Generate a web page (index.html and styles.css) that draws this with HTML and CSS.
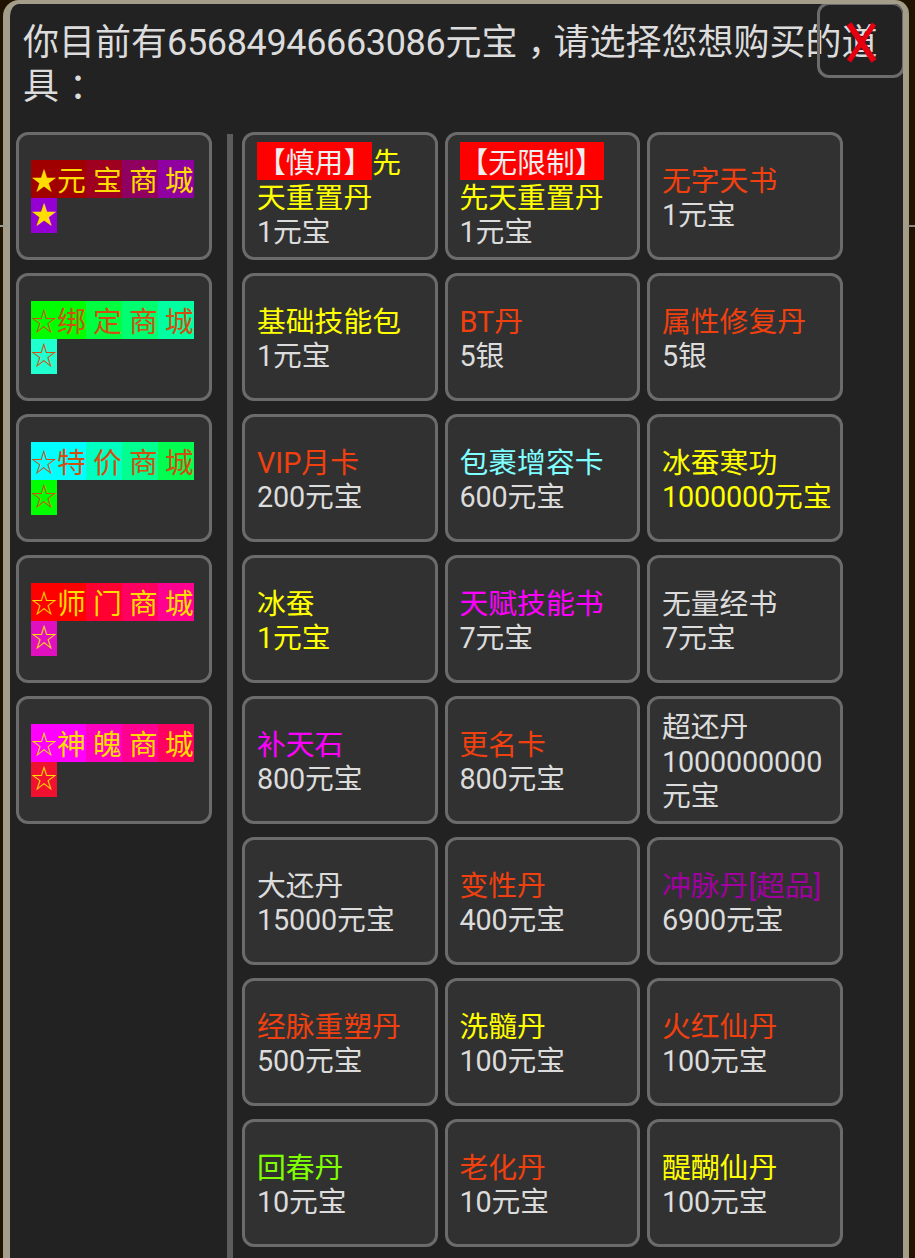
FILE: index.html
```html
<!DOCTYPE html>
<html lang="zh-CN">
  <head>
    <meta charset="UTF-8" />
    <title>元宝商城</title>
    <link rel="stylesheet" href="styles.css">
  </head>
  <body>
    <div class="dialog">
      <p class="dialog-title">你目前有<span class="num">65684946663086</span>元宝<span class="punct">，</span>请选择您想购买的道具<span class="punct">：</span></p>

      <button class="close-btn" type="button" aria-label="关闭">
        <svg width="88" height="76" viewBox="0 0 88 76">
          <path d="M32 22 L57 59" stroke="#e6000f" stroke-width="6" fill="none" />
          <path d="M57 22 L32 59" stroke="#e6000f" stroke-width="5" fill="none" />
        </svg>
      </button>

      <div class="shop-body">
        <!-- 左侧商城列表 -->
        <div class="shop-list">
          <div class="card shop-card shop-gold">
            <div class="shop-label">
              <span class="star" style="background:#a00000">★</span><span style="background:#a00000">元</span><span style="background:#a00020"> 宝</span><span style="background:#900060"> 商</span><span style="background:#9000a0"> 城</span><span class="star wrap" style="background:#9400d3">★</span>
            </div>
          </div>
          <div class="card shop-card shop-orange">
            <div class="shop-label">
              <span class="star" style="background:#00ff00">☆</span><span style="background:#00ff00">绑</span><span style="background:#00ff40"> 定</span><span style="background:#00ff70"> 商</span><span style="background:#00ffa0"> 城</span><span class="star wrap" style="background:#20ffd0">☆</span>
            </div>
          </div>
          <div class="card shop-card shop-orange">
            <div class="shop-label">
              <span class="star" style="background:#00ffff">☆</span><span style="background:#00ffff">特</span><span style="background:#00ffc0"> 价</span><span style="background:#00ff90"> 商</span><span style="background:#00ff50"> 城</span><span class="star wrap" style="background:#00ff00">☆</span>
            </div>
          </div>
          <div class="card shop-card shop-gold">
            <div class="shop-label">
              <span class="star" style="background:#ff0000">☆</span><span style="background:#ff0000">师</span><span style="background:#ff0030"> 门</span><span style="background:#ff0060"> 商</span><span style="background:#ff0090"> 城</span><span class="star wrap" style="background:#e010c0">☆</span>
            </div>
          </div>
          <div class="card shop-card shop-gold">
            <div class="shop-label">
              <span class="star" style="background:#ff00ff">☆</span><span style="background:#ff00ff">神</span><span style="background:#ff00c0"> 魄</span><span style="background:#ff0090"> 商</span><span style="background:#ff0060"> 城</span><span class="star wrap" style="background:#f01030">☆</span>
            </div>
          </div>
        </div>

        <div class="divider"></div>

        <!-- 道具列表 -->
        <div class="item-grid">
          <div class="card item-card"><div><span class="tag">【慎用】</span><span class="yellow">先天重置丹</span><br><span class="num">1</span>元宝</div></div>
          <div class="card item-card"><div><span class="tag">【无限制】</span><span class="yellow">先天重置丹</span><br><span class="num">1</span>元宝</div></div>
          <div class="card item-card"><div><span class="red">无字天书</span><br><span class="num">1</span>元宝</div></div>

          <div class="card item-card"><div><span class="yellow">基础技能包</span><br><span class="num">1</span>元宝</div></div>
          <div class="card item-card"><div><span class="red">BT丹</span><br><span class="num">5</span>银</div></div>
          <div class="card item-card"><div><span class="red">属性修复丹</span><br><span class="num">5</span>银</div></div>

          <div class="card item-card"><div><span class="red">VIP月卡</span><br><span class="num">200</span>元宝</div></div>
          <div class="card item-card"><div><span class="cyan">包裹增容卡</span><br><span class="num">600</span>元宝</div></div>
          <div class="card item-card"><div><span class="yellow">冰蚕寒功<br><span class="num">1000000</span>元宝</span></div></div>

          <div class="card item-card"><div><span class="yellow">冰蚕<br><span class="num">1</span>元宝</span></div></div>
          <div class="card item-card"><div><span class="pink">天赋技能书</span><br><span class="num">7</span>元宝</div></div>
          <div class="card item-card"><div>无量经书<br><span class="num">7</span>元宝</div></div>

          <div class="card item-card"><div><span class="pink">补天石</span><br><span class="num">800</span>元宝</div></div>
          <div class="card item-card"><div><span class="red">更名卡</span><br><span class="num">800</span>元宝</div></div>
          <div class="card item-card"><div>超还丹<br><span class="num">1000000000</span>元宝</div></div>

          <div class="card item-card"><div>大还丹<br><span class="num">15000</span>元宝</div></div>
          <div class="card item-card"><div><span class="red">变性丹</span><br><span class="num">400</span>元宝</div></div>
          <div class="card item-card"><div><span class="purple">冲脉丹[超品]</span><br><span class="num">6900</span>元宝</div></div>

          <div class="card item-card"><div><span class="red">经脉重塑丹</span><br><span class="num">500</span>元宝</div></div>
          <div class="card item-card"><div><span class="yellow">洗髓丹</span><br><span class="num">100</span>元宝</div></div>
          <div class="card item-card"><div><span class="red">火红仙丹</span><br><span class="num">100</span>元宝</div></div>

          <div class="card item-card"><div><span class="green">回春丹</span><br><span class="num">10</span>元宝</div></div>
          <div class="card item-card"><div><span class="red">老化丹</span><br><span class="num">10</span>元宝</div></div>
          <div class="card item-card"><div><span class="yellow">醍醐仙丹</span><br><span class="num">100</span>元宝</div></div>
        </div>
      </div>
    </div>
  </body>
</html>
```
FILE: styles.css
```css
* {
  margin: 0;
  padding: 0;
  box-sizing: border-box;
}

html,
body {
  height: 100%;
}

body {
  font-family: Roboto, "Noto Sans CJK SC", sans-serif;
  background: #201400;
  color: #dcdcdc;
  overflow: hidden;
  padding: 0 6px 0 3px;
}

/* 窗口边框上的小装饰 */
body::before {
  content: "";
  position: absolute;
  top: 2px;
  left: 7px;
  width: 14px;
  height: 10px;
  border-top: 1px solid #8a8678;
  border-left: 1px solid #8a8678;
  border-radius: 100% 0 0 0;
}

body::after {
  content: "";
  position: absolute;
  top: 225px;
  left: 0;
  right: 0;
  height: 2px;
  background: linear-gradient(90deg, #9a9a90 8px, transparent 8px, transparent 908px, #8a8a80 908px);
}

.dialog {
  position: relative;
  height: 1258px;
  background: #222222;
  border: 6px solid #a39d8a;
  border-width: 4px 6px 0 7px;
  border-radius: 16px 14px 0 0;
  padding: 17px 0 0 6px;
  overflow: hidden;
}

.dialog-title {
  font-size: 36px;
  line-height: 44px;
  padding-left: 7px;
}

.dialog-title .num {
  letter-spacing: -0.35px;
}

.num {
  letter-spacing: -0.17px;
}

/* 全角标点放到字格中间 */
.punct {
  display: inline-block;
  width: 36px;
  text-indent: 10px;
  white-space: nowrap;
}

.close-btn {
  position: absolute;
  top: -2px;
  right: -2px;
  width: 88px;
  height: 76px;
  background: transparent;
  border: 3px solid #6c6c6c;
  border-radius: 12px;
}

.close-btn svg {
  position: absolute;
  top: -3px;
  left: -3px;
}

.shop-body {
  display: flex;
  margin-top: 23px;
  height: 1200px;
}

.card {
  display: flex;
  align-items: center;
  height: 128px;
  background: #313131;
  border: 3px solid #6b6b6b;
  border-radius: 12px;
}

.shop-list {
  width: 196px;
  display: flex;
  flex-direction: column;
  gap: 13px;
}

.shop-card {
  padding: 0 6px 0 12px;
  font-size: 28.8px;
}

.shop-gold {
  color: #ffdd00;
}

.shop-orange {
  color: #d2500f;
}

.shop-label {
  font-size: 0;
}

.shop-label span {
  display: inline-block;
  height: 38px;
  font-size: 28.8px;
  line-height: 42px;
  white-space: pre;
  vertical-align: top;
}

.shop-label .star {
  width: 26px;
  font-size: 26px;
  text-align: center;
}

.shop-label .wrap {
  height: 35px;
  line-height: 35px;
}

.divider {
  width: 6px;
  margin: 2px 9px 0 15px;
  background: #5c5c5c;
}

.item-grid {
  display: grid;
  grid-template-columns: repeat(3, 195.75px);
  grid-auto-rows: 128px;
  gap: 13px 6.75px;
}

.item-card {
  padding: 4px 6px 0 12px;
  font-size: 28.8px;
  line-height: 34.5px;
}

.tag {
  background: #ff0000;
  color: #eeeeee;
  padding: 4px 0 0;
}

.yellow {
  color: #ffff00;
}

.red {
  color: #f0400f;
}

.cyan {
  color: #7fffff;
}

.pink {
  color: #ff00ff;
}

.purple {
  color: #a000a0;
}

.green {
  color: #7fff00;
}
```
